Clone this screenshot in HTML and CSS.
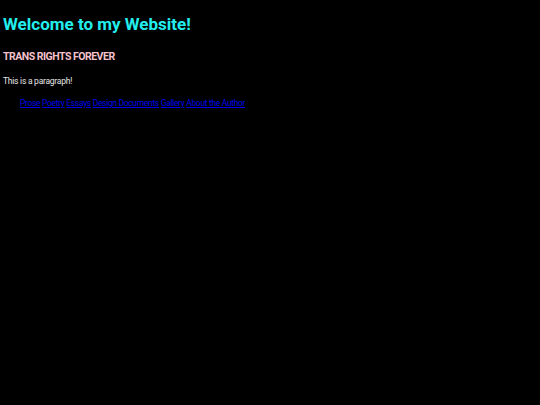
FILE: index.html
```html
<!DOCTYPE html>
<html>
<head>
<meta charset="utf-8">
<title>Welcome</title>
<link rel="stylesheet" href="styles.css">
</head>
<body>
<h1 class="title">Welcome to my Website!</h1>
<h2 class="slogan">TRANS RIGHTS FOREVER</h2>
<p class="intro">This is a paragraph!</p>
<nav class="nav">
<a href="#">Prose</a> <a href="#">Poetry</a> <a href="#">Essays</a> <a href="#">Design Documents</a> <a href="#">Gallery</a> <a href="#">About the Author</a>
</nav>
</body>
</html>
```
FILE: styles.css
```css
html, body {
  background: #000;
}
body {
  margin: 0;
  padding: 14px 3px;
  font-family: Roboto, "DejaVu Sans", sans-serif;
  color: #e6e6e6;
}
.title {
  margin: 0 0 16px;
  font-size: 17px;
  line-height: 20px;
  font-weight: bold;
  color: #22eeee;
}
.slogan {
  margin: 0 0 11px;
  font-size: 10.5px;
  line-height: 14px;
  letter-spacing: -0.5px;
  font-weight: bold;
  color: #f4c2cc;
}
.intro {
  margin: 0 0 10px;
  font-size: 8.5px;
  line-height: 12px;
  letter-spacing: -0.25px;
}
.nav {
  padding-left: 17px;
  font-size: 8.5px;
  line-height: 12px;
  letter-spacing: -0.33px;
}
.nav a {
  color: #0000ee;
}
```
